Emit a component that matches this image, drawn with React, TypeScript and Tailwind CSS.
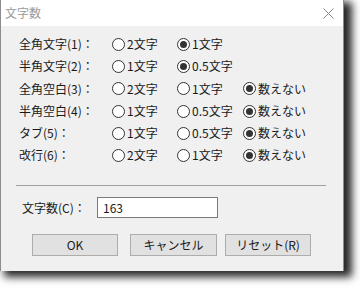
import React from "react";

const font = { fontFamily: '"Noto Sans CJK JP", "Noto Sans", sans-serif' };

function Radio({ checked, label, w }: { checked?: boolean; label: string; w: string }) {
  return (
    <div className={`flex items-center ${w}`}>
      <span className="flex h-[13px] w-[13px] items-center justify-center rounded-full border border-[#333] bg-white">
        {checked && <span className="h-[7px] w-[7px] rounded-full bg-[#333]" />}
      </span>
      <span className="ml-[2px] text-[12px] leading-none text-[#1a1a1a]">{label}</span>
    </div>
  );
}

const rows: { label: string; opts: { t: string; c?: boolean }[]; h: string }[] = [
  { label: "全角文字(1)：", opts: [{ t: "2文字" }, { t: "1文字", c: true }], h: "h-[22px]" },
  { label: "半角文字(2)：", opts: [{ t: "1文字" }, { t: "0.5文字", c: true }], h: "h-[22px]" },
  { label: "全角空白(3)：", opts: [{ t: "2文字" }, { t: "1文字" }, { t: "数えない", c: true }], h: "h-[23px]" },
  { label: "半角空白(4)：", opts: [{ t: "1文字" }, { t: "0.5文字" }, { t: "数えない", c: true }], h: "h-[22px]" },
  { label: "タブ(5)：", opts: [{ t: "1文字" }, { t: "0.5文字" }, { t: "数えない", c: true }], h: "h-[22px]" },
  { label: "改行(6)：", opts: [{ t: "2文字" }, { t: "1文字" }, { t: "数えない", c: true }], h: "h-[22px]" },
];

export default function App() {
  return (
    <div className="h-[289px] w-[360px] overflow-hidden bg-white" style={font}>
      <div className="flex h-[271px] w-[344px] flex-col border-x border-[#8c8c8c] bg-[#f0f0f0] shadow-[6px_4px_8px_2px_rgba(0,0,0,0.85)]">
        {/* title bar */}
        <div className="flex h-[26px] shrink-0 items-center justify-between bg-white pl-[4px] pr-[9px]">
          <span className="text-[12px] text-[#9a9a9a]">文字数</span>
          <svg width="11" height="11" viewBox="0 0 11 11" className="mt-[1px]">
            <path d="M0.5 0.5 L10.5 10.5 M10.5 0.5 L0.5 10.5" stroke="#8a8a8a" strokeWidth="1" />
          </svg>
        </div>
        {/* body */}
        <div className="flex flex-col pt-[7px]">
          {rows.map((r) => (
            <div key={r.label} className={`flex items-center pl-[18px] ${r.h}`}>
              <span className="w-[93px] text-[12px] leading-none text-[#1a1a1a]">{r.label}</span>
              <Radio w="w-[65px]" label={r.opts[0].t} checked={r.opts[0].c} />
              <Radio w="w-[66px]" label={r.opts[1].t} checked={r.opts[1].c} />
              {r.opts[2] && <Radio w="w-[70px]" label={r.opts[2].t} checked={r.opts[2].c} />}
            </div>
          ))}
          <div className="ml-[15px] mt-[19px] h-px w-[310px] bg-[#a0a0a0]" />
          <div className="mt-[11px] flex items-center pl-[21px]">
            <span className="w-[75px] text-[12px] leading-none text-[#1a1a1a]">文字数(C)：</span>
            <div className="flex h-[21px] w-[121px] items-center border border-[#7a7a7a] bg-white pl-[5px] text-[12px] text-[#1a1a1a]">
              163
            </div>
          </div>
          <div className="mt-[16px] flex pl-[31px]">
            <button className="flex h-[22px] w-[86px] items-center justify-center border border-[#adadad] bg-[#e1e1e1] text-[12px] text-[#1a1a1a]">
              OK
            </button>
            <button className="ml-[12px] flex h-[22px] w-[87px] items-center justify-center border border-[#adadad] bg-[#e1e1e1] text-[12px] text-[#1a1a1a]">
              キャンセル
            </button>
            <button className="ml-[8px] flex h-[22px] w-[86px] items-center justify-center border border-[#adadad] bg-[#e1e1e1] text-[12px] text-[#1a1a1a]">
              リセット(R)
            </button>
          </div>
        </div>
      </div>
    </div>
  );
}
